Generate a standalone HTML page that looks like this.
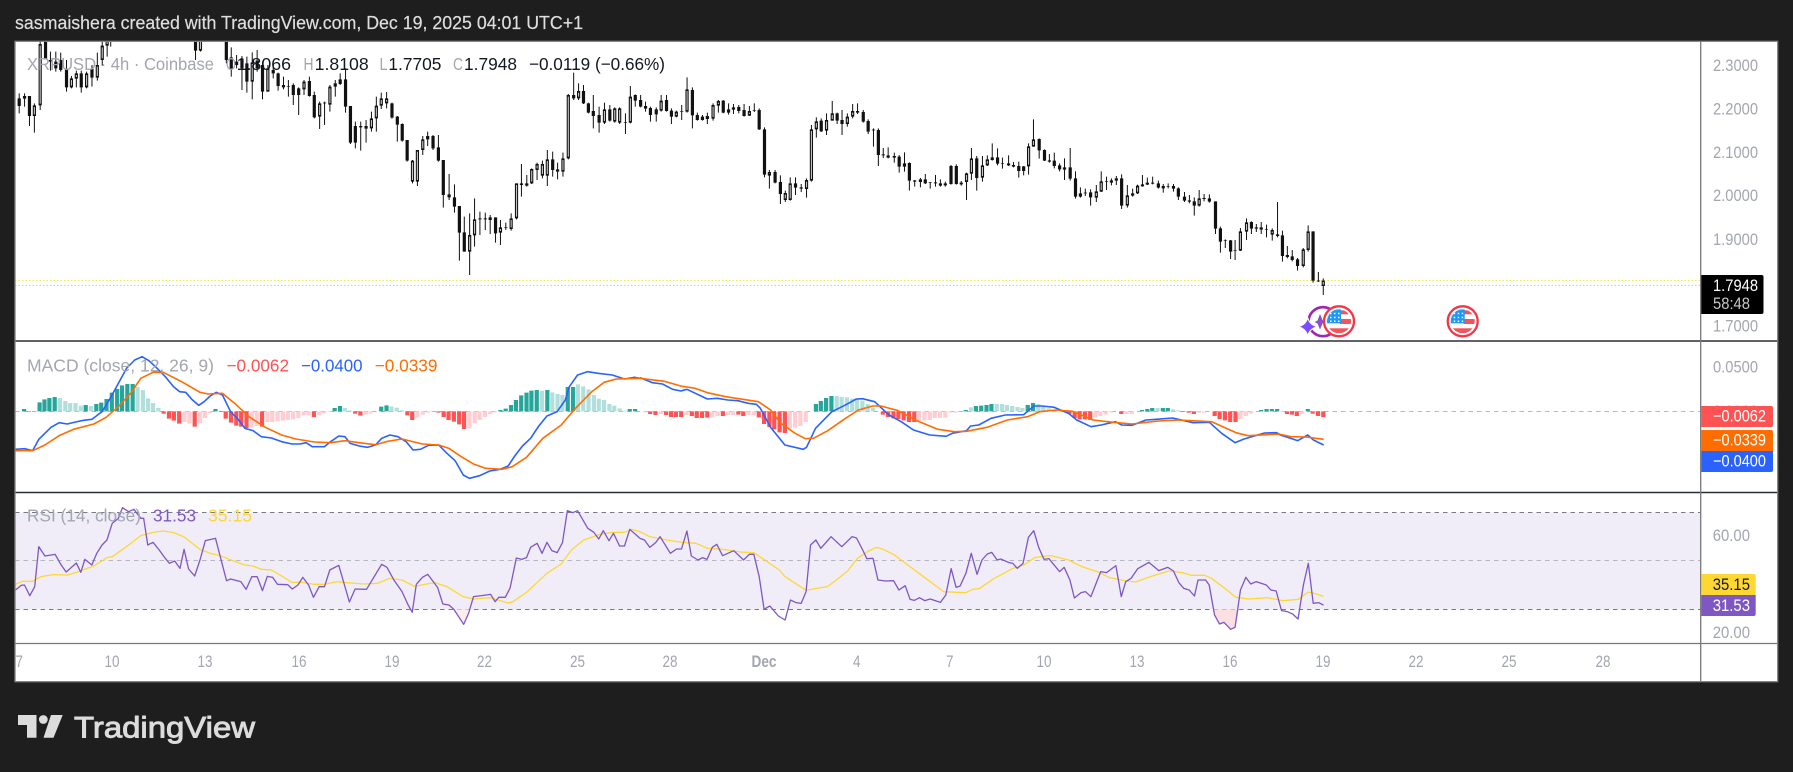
<!DOCTYPE html>
<html lang="en"><head><meta charset="utf-8"><title>XRPUSD 4h Coinbase - TradingView</title>
<style>
html,body{margin:0;padding:0;background:#1e1e1e;width:1793px;height:772px;overflow:hidden}
svg{display:block;font-family:"Liberation Sans",sans-serif}
path.v,polyline{vector-effect:non-scaling-stroke;fill:none}
polyline{stroke-linejoin:round}
.ax{font-size:16.5px;fill:#a3a6af}
.lg{font-size:17.5px}
.g{fill:#a3a6af}
.k{fill:#131722}
.tl{font-size:16.5px;fill:#a3a6af}
</style></head><body>
<svg width="1793" height="772" viewBox="0 0 1793 772" xmlns="http://www.w3.org/2000/svg">
<defs><clipPath id="fc"><circle r="12"/></clipPath></defs>
<rect width="1793" height="772" fill="#1e1e1e"/>
<rect x="15" y="41" width="1763" height="641" fill="#fff"/>

<!-- RSI band -->
<rect x="15" y="512.5" width="1686" height="97" fill="#f0edf8"/>
<g fill="none" stroke-dasharray="4.5 4" stroke-width="1">
<path d="M15 512.5H1701M15 609.5H1701" stroke="#787b86"/>
<path d="M15 560.5H1701M15 411.5H1701" stroke="#b6b8c0"/>
</g>
<g fill="none" stroke-dasharray="1.5 2" stroke-width="1">
<path d="M15 280.5H1701" stroke="#f5e64a"/>
<path d="M15 285.5H1701" stroke="#c9c9d4"/>
</g>

<!-- candles left -->
<g transform="scale(.44643,.33333)">
<path class="v" stroke="#111" stroke-width="1" d="M43 280V340M55 280V320M66 288V378M77 310V398M90 100V330M102 100V178M113 155V212M125 155V215M136 158V215M149 180V275M160 228V265M171 212V262M182 212V278M194 215V265M206 195V260M218 158V242M229 120V197M240 100V170M248 100V140M438 100V180M449 100V155M507 100V190M518 142V230M530 165V205M542 168V270M553 170V278M565 157V298M576 150V215M588 185V298M600 195V275M612 200V235M623 218V272M635 230V268M646 240V290M657 250V315M669 262V345M681 240V285M693 230V290M704 275V355M716 305V387M727 305V375M739 255V335M751 240V290M762 220V255M774 205V338M785 318V432M796 365V445M808 365V452M820 360V428M832 335V395M843 290V395M854 278V327M866 276V325M878 308V356M890 348V425M901 370V425M912 420V485M924 480V550M935 450V558M947 408V465M958 395V438M970 405V450M982 405V485M993 480V623M1006 522V600M1018 553V638M1029 618V782M1040 650V755M1052 640V825M1063 595V740M1075 635V705M1087 638V690M1098 645V702M1110 652V728M1121 660V735M1133 668V690M1145 640V692M1157 550V658M1168 492V590M1180 525V560M1191 505V552M1203 488V540M1215 482V535M1226 450V558M1238 455V530M1249 488V538M1261 458V530M1273 282V478M1285 218V300M1296 250V300M1307 255V312M1318 308V340M1329 285V385M1342 320V398M1354 308V372M1366 315V365M1377 322V368M1388 322V372M1401 340V402M1412 258V370M1423 283V320M1435 285V322M1446 305V335M1457 320V365M1470 322V365M1481 285V335M1493 285V335M1504 325V372M1515 332V352M1527 315V360M1539 232V338M1551 262V385M1562 338V362"/>
<path class="v" stroke="#111" stroke-width="3.2" d="M43 295V318M55 288V296M66 288V348M77 316V348M90 132V316M102 100V178M113 180V185M125 185V205M136 180V210M149 208V262M160 235V262M171 220V236M182 220V262M194 220V262M206 207V233M218 195V233M229 137V180M240 100V137M438 100V152M449 100V152M507 100V180M518 172V207M530 185V195M542 176V205M553 190V245M565 187V245M576 182V205M588 195V275M600 205V275M612 210V220M623 220V258M635 255V262M646 258V260M657 255V285M669 265V285M681 245V268M693 243V288M704 285V352M716 310V350M727 308V310M739 260V314M751 250V260M762 238V252M774 238V320M785 318V428M796 378V428M808 378V382M820 378V386M832 355V385M843 317V355M854 295V317M866 295V310M878 310V353M890 350V374M901 372V422M912 420V482M924 482V545M935 450V545M947 418V450M958 408V418M970 408V445M982 442V482M993 480V585M1006 583V592M1018 592V620M1029 618V698M1040 697V755M1052 705V755M1063 658V706M1075 655V658M1087 655V658M1098 652V660M1110 652V700M1121 682V698M1133 682V684M1145 655V687M1157 550V655M1168 550V555M1180 550V557M1191 507V550M1203 492V510M1215 492V527M1226 478V527M1238 478V510M1249 508V515M1261 475V515M1273 285V475M1285 285V295M1296 273V295M1307 273V310M1318 310V338M1329 333V348M1342 345V368M1354 328V368M1366 328V362M1377 325V365M1388 325V368M1401 366V368M1412 290V368M1423 285V302M1435 300V320M1446 318V326M1457 324V345M1470 328V343M1481 302V332M1493 300V333M1504 332V350M1515 335V350M1527 333V335M1539 268V335M1551 270V346M1562 345V360"/>
<path class="v" stroke="#c4c4c4" stroke-width="1.1" d="M77 321V343M90 137V311M160 240V257M171 225V231M194 225V257M218 200V228M229 142V175M240 100V132M449 100V147M565 192V240M600 210V270M681 250V263M716 315V345M739 265V309M832 360V380M843 322V350M854 300V312M866 300V305M924 487V540M935 455V540M947 423V445M958 413V413M1052 710V750M1063 663V701M1121 687V693M1145 660V682M1157 555V650M1191 512V545M1203 497V505M1215 497V522M1226 483V522M1261 480V510M1273 290V470M1296 278V290M1354 333V363M1377 330V360M1388 330V363M1412 295V363M1481 307V327M1515 340V345M1539 273V330"/>
</g>
<!-- candles right -->
<g transform="translate(700,30) scale(.40816,.33333)">
<path class="v" stroke="#111" stroke-width="1" d="M6 255V272M18 248V282M32 220V272M45 210V248M57 210V250M70 220V254M82 222V252M95 225V250M108 222V260M121 228V258M133 220V246M145 235V300M158 292V442M170 420V476M184 420V460M197 436V522M209 482V516M221 442V512M234 442V495M248 462V486M261 445V503M273 285V455M285 262V323M297 265V306M310 250V315M324 213V272M336 248V282M348 240V315M361 250V290M374 222V265M386 220V252M400 240V278M412 268V312M425 295V350M437 295V408M449 354V384M461 352V385M476 368V398M488 375V428M501 367V425M513 397V482M526 450V470M540 444V472M552 432V462M564 456V476M577 435V470M589 448V470M601 455V470M615 405V464M628 403V464M640 453V467M653 428V510M665 354V450M678 378V482M692 378V455M704 376V408M716 340V392M729 355V406M741 383V416M756 376V408M768 396V412M781 395V443M793 408V436M805 340V434M817 268V350M831 325V386M844 358V393M856 372V398M868 368V415M881 400V424M893 385V450M907 354V452M920 424V506M932 472V503M944 476V498M957 478V527M971 465V516M983 424V486M996 440V480M1008 445V466M1020 438V465M1033 433V537M1047 465V533M1060 476V500M1072 464V492M1084 435V470M1096 443V465M1109 440V463M1123 452V476M1135 462V488M1147 460V475M1160 462V485M1172 472V510M1187 486V516M1199 495V520M1211 502V557M1223 480V530M1235 492V514M1248 493V518M1263 514V612M1275 590V668M1287 628V654M1300 630V687M1311 630V690M1324 594V663M1339 565V630M1351 574V612M1363 582V606M1375 576V612M1388 584V622M1402 595V632M1415 516V622M1427 602V695M1439 648V685M1451 660V694M1464 684V722M1478 654V712M1490 586V665M1502 604V758M1515 726V756M1527 745V795"/>
<path class="v" stroke="#111" stroke-width="3.2" d="M6 260V270M18 258V267M32 225V266M45 213V227M57 212V248M70 238V248M82 232V239M95 231V243M108 240V258M121 243V257M133 241V243M145 240V298M158 298V434M170 426V437M184 426V458M197 456V492M209 489V510M221 460V510M234 460V473M248 472V476M261 450V477M273 298V452M285 274V298M297 272V304M310 270V302M324 250V272M336 250V272M348 270V282M361 260V282M374 243V260M386 243V248M400 246V275M412 273V305M425 299V301M437 300V375M449 373V376M461 376V383M476 378V383M488 380V410M501 400V410M513 399V452M526 451V455M540 448V456M552 448V460M564 457V459M577 457V460M589 460V467M601 460V466M615 408V462M628 408V462M640 458V463M653 430V456M665 385V431M678 385V444M692 406V443M704 388V406M716 382V390M729 382V401M741 399V401M756 400V406M768 405V410M781 408V423M793 409V423M805 349V409M817 328V350M831 327V361M844 360V392M856 391V395M868 392V408M881 406V418M893 412V419M907 412V446M920 445V500M932 490V500M944 488V490M957 487V502M971 484V503M983 454V485M996 453V455M1008 451V458M1020 445V452M1033 445V527M1047 496V527M1060 490V497M1072 467V490M1084 463V469M1096 458V464M1109 458V461M1123 460V473M1135 468V475M1147 469V471M1160 468V476M1172 475V500M1187 500V512M1199 511V515M1211 514V527M1223 505V527M1235 504V507M1248 505V515M1263 514V596M1275 595V635M1287 630V632M1300 631V665M1311 660V662M1324 604V662M1339 577V605M1351 576V596M1363 592V596M1375 592V599M1388 597V599M1402 600V614M1415 613V618M1427 616V678M1439 675V681M1451 679V690M1464 688V708M1478 658V708M1490 604V660M1502 604V752M1515 752V754M1527 752V768"/>
<path class="v" stroke="#c4c4c4" stroke-width="1.1" d="M32 230V261M45 218V222M121 248V252M170 431V432M221 465V505M209 494V505M261 455V472M273 303V447M285 279V293M310 275V297M324 255V267M361 265V277M374 248V255M653 435V451M665 390V426M692 411V438M704 393V401M805 354V404M817 333V345M971 489V498M983 459V480M1047 501V522M1072 472V485M1223 510V522M1324 609V657M1339 582V600M1402 605V609M1478 663V703M1490 609V655M1527 756V764"/>
</g>

<!-- MACD histogram -->
<g transform="translate(0,340) scale(.40816,.33333)">
<path class="v" fill="none" stroke="#26a69a" stroke-width="4.2" d="M59 214V207M97 214V187M109 214V178M121 214V174M134 214V171M210 214V195M236 214V192M248 214V188M261 214V177M274 214V158M287 214V147M299 214V136M312 214V132M325 214V132M528 214V207M820 214V204M833 214V198M934 214V200M947 214V196M1226 214V210M1239 214V206M1252 214V195M1264 214V180M1277 214V166M1290 214V158M1302 214V152M1315 214V150M1341 214V150M1391 214V141M1404 214V141M1543 214V207M1556 214V207"/>
<path class="v" fill="none" stroke="#b2dfdb" stroke-width="4.2" d="M147 214V174M160 214V183M172 214V189M185 214V189M198 214V197M223 214V198M337 214V141M350 214V150M363 214V175M375 214V189M388 214V204M845 214V204M858 214V212M959 214V199M972 214V203M985 214V211M1328 214V152M1353 214V157M1366 214V162M1378 214V165M1416 214V133M1429 214V139M1442 214V148M1455 214V165M1467 214V176M1480 214V180M1493 214V192M1505 214V197M1518 214V205M1531 214V212"/>
<path class="v" fill="none" stroke="#ff5252" stroke-width="4.2" d="M71 214V216M401 214V221M414 214V236M426 214V242M439 214V251M477 214V260M541 214V216M553 214V236M566 214V248M579 214V257M591 214V260M604 214V264M642 214V260M769 214V231M870 214V221M883 214V227M998 214V226M1010 214V240M1074 214V218M1087 214V231M1099 214V240M1112 214V245M1125 214V253M1137 214V267"/>
<path class="v" fill="none" stroke="#ffcdd2" stroke-width="4.2" d="M452 214V246M464 214V251M490 214V250M502 214V234M515 214V220M617 214V262M629 214V258M655 214V246M667 214V246M680 214V244M693 214V242M705 214V240M718 214V238M731 214V234M744 214V226M756 214V226M782 214V226M794 214V220M807 214V216M896 214V224M908 214V220M1023 214V233M1036 214V224M1049 214V218M1150 214V265M1163 214V250M1175 214V240M1188 214V231M1201 214V222M1213 214V217"/>
<polyline stroke="#2962ff" stroke-width="1.6" points="38,328 60,326 80,332 95,298 110,280 125,262 145,248 165,252 185,246 205,241 225,238 250,215 270,175 290,130 310,85 330,60 348,50 365,62 385,85 405,110 425,140 440,155 455,157 470,178 487,196 500,185 515,168 530,157 545,165 565,215 585,240 600,265 620,272 640,290 665,294 690,305 715,312 735,312 750,308 765,320 795,320 810,305 830,288 845,290 858,310 880,318 900,322 920,315 935,295 955,285 975,290 995,305 1012,330 1030,328 1050,316 1075,315 1095,340 1115,362 1135,405 1150,415 1175,407 1200,393 1225,388 1245,378 1260,350 1280,318 1300,295 1320,258 1340,228 1365,215 1385,180 1395,140 1415,105 1440,95 1465,100 1500,105 1530,117 1555,112 1568,115"/>
<polyline stroke="#ff6d00" stroke-width="1.6" points="38,332 80,332 110,315 145,287 180,268 230,252 260,232 290,200 320,160 345,115 375,97 400,97 445,125 490,157 510,162 545,160 575,190 610,230 650,262 690,285 725,297 770,306 810,308 845,302 880,308 920,314 950,304 985,297 1035,312 1075,315 1100,325 1130,350 1160,372 1190,385 1230,388 1255,380 1290,352 1330,295 1375,255 1410,205 1450,155 1480,127 1510,117 1568,115"/>
</g>
<g transform="translate(640,340) scale(.40816,.33333)">
<path class="v" fill="none" stroke="#26a69a" stroke-width="4.2" d="M431 214V192M443 214V183M456 214V174M469 214V168M798 214V210M823 214V198M836 214V197M849 214V195M861 214V192M950 214V195M963 214V189M1230 214V210M1243 214V207M1255 214V204M1281 214V204M1293 214V204M1522 214V210M1535 214V207M1548 214V207M1561 214V207"/>
<path class="v" fill="none" stroke="#b2dfdb" stroke-width="4.2" d="M482 214V168M494 214V171M507 214V172M520 214V176M532 214V178M545 214V182M558 214V192M571 214V204M811 214V202M874 214V192M887 214V192M899 214V195M912 214V198M925 214V201M937 214V204M976 214V192M988 214V200M1001 214V205M1014 214V210M1268 214V204M1306 214V208M1318 214V211"/>
<path class="v" fill="none" stroke="#ff5252" stroke-width="4.2" d="M25 214V222M38 214V225M64 214V225M76 214V231M88 214V231M101 214V231M127 214V228M139 214V234M152 214V234M165 214V233M203 214V228M241 214V224M253 214V228M291 214V232M304 214V252M317 214V261M329 214V268M342 214V277M355 214V279M595 214V224M608 214V231M621 214V235M633 214V237M646 214V241M659 214V246M672 214V246M1052 214V222M1065 214V234M1077 214V238M1090 214V238M1103 214V240M1179 214V222M1331 214V216M1344 214V218M1357 214V222M1408 214V228M1420 214V237M1433 214V241M1446 214V246M1459 214V246"/>
<path class="v" fill="none" stroke="#ffcdd2" stroke-width="4.2" d="M12 214V217M51 214V222M114 214V225M177 214V232M190 214V228M216 214V225M228 214V225M266 214V225M279 214V225M367 214V266M380 214V263M393 214V258M406 214V246M684 214V243M697 214V242M710 214V240M722 214V234M735 214V234M748 214V232M760 214V218M773 214V218M1116 214V232M1128 214V228M1141 214V224M1154 214V218M1192 214V222M1205 214V222M1369 214V218M1382 214V218M1471 214V237M1484 214V228M1497 214V221"/>
<polyline stroke="#2962ff" stroke-width="1.6" points="0,113 30,128 55,132 80,148 100,153 115,148 165,177 190,175 215,180 240,182 265,190 285,193 295,205 320,262 355,315 400,328 408,322 430,265 470,215 500,197 530,177 545,176 575,185 610,225 640,245 670,270 710,285 750,289 765,280 800,272 810,258 830,255 860,235 895,225 940,224 965,198 985,198 1015,202 1050,220 1070,240 1105,260 1130,255 1165,245 1180,255 1205,256 1240,240 1265,238 1305,234 1355,248 1395,247 1425,280 1458,308 1480,297 1530,279 1560,278 1568,285"/>
<polyline stroke="#ff6d00" stroke-width="1.6" points="0,115 60,124 100,138 135,145 165,158 210,170 290,185 320,210 345,250 380,280 405,296 425,295 460,272 500,238 535,210 570,198 590,198 630,211 680,243 730,268 770,275 800,274 850,262 900,240 950,230 980,215 1020,210 1060,214 1110,240 1160,247 1205,252 1270,243 1320,240 1400,245 1460,278 1490,287 1568,282"/>
</g>
<g transform="translate(1200,190) scale(.37821,.33333)">
<path class="v" fill="none" stroke="#26a69a" stroke-width="4.2" d="M285 664V657"/>
<path class="v" fill="none" stroke="#ff5252" stroke-width="4.2" d="M230 664V672M243 664V674M256 664V678M298 664V671M312 664V678M326 664V681"/>
<path class="v" fill="none" stroke="#ffcdd2" stroke-width="4.2" d="M216 664V666M270 664V672"/>
<polyline stroke="#2962ff" stroke-width="1.6" points="212,735 240,745 258,752 285,735 300,750 327,765"/>
<polyline stroke="#ff6d00" stroke-width="1.6" points="212,733 240,740 280,741 327,748"/>
</g>

<!-- RSI lines -->
<g transform="translate(0,490) scale(.40816,.33333)">
<polygon points="1105,358 1112,358 1136,403 1148,370 1155,358" fill="#fdeeee"/>
<polyline stroke="#fdd835" stroke-width="1.3" points="38,283 55,274 80,274 100,260 130,254 165,255 190,246 230,228 262,203 275,200 315,165 345,137 375,127 400,123 425,128 450,140 490,178 515,190 540,197 570,212 600,225 620,228 640,238 665,240 690,258 715,277 740,277 770,283 795,283 825,275 860,279 890,282 925,280 955,265 985,270 1015,289 1040,283 1065,278 1095,290 1135,320 1160,327 1200,323 1245,339 1255,336 1290,307 1340,250 1375,222 1400,180 1430,150 1470,133 1500,127 1530,127 1548,118 1568,125"/>
<polyline stroke="#7e57c2" stroke-width="1.3" points="38,300 52,286 60,285 73,317 85,290 95,170 110,198 135,193 150,225 162,246 175,232 187,219 198,247 208,208 225,225 237,190 250,165 262,150 275,100 290,85 300,53 315,65 328,58 345,85 352,85 362,165 375,157 390,180 405,205 415,220 428,213 441,235 451,178 462,237 477,258 490,210 503,152 528,145 555,272 565,267 590,275 603,298 617,260 630,260 643,302 655,259 668,262 680,283 705,284 716,297 730,285 742,262 756,285 768,322 782,290 795,290 808,240 830,226 856,336 870,297 898,298 935,223 948,232 965,270 985,305 1000,345 1010,367 1020,283 1035,262 1048,253 1072,292 1085,342 1100,345 1112,358 1136,403 1148,370 1160,320 1180,317 1202,313 1213,335 1222,322 1238,322 1250,293 1265,204 1278,208 1290,203 1300,172 1316,160 1328,190 1340,157 1352,182 1365,188 1378,158 1390,62 1403,68 1415,62 1440,115 1455,127 1467,147 1478,122 1492,152 1503,130 1518,168 1530,168 1543,118 1568,145"/>
</g>
<g transform="translate(640,490) scale(.44643,.33333)">
<polygon points="1285,358 1287,375 1298,402 1308,397 1323,418 1333,412 1342,358" fill="#fcdfe1"/>
<polyline stroke="#fdd835" stroke-width="1.3" points="0,125 22,140 60,150 95,157 125,160 152,175 180,177 225,186 255,188 285,215 312,240 325,260 372,301 395,295 420,290 440,270 465,243 487,205 512,183 530,172 545,178 570,195 600,225 640,265 680,305 730,308 745,298 760,296 790,268 815,250 835,235 860,225 885,202 920,197 960,210 990,230 1030,248 1050,262 1085,272 1110,276 1150,257 1185,243 1215,248 1235,256 1265,256 1280,265 1310,295 1335,322 1365,327 1405,323 1440,332 1475,328 1497,306 1510,310 1531,319"/>
<polyline stroke="#7e57c2" stroke-width="1.3" points="0,145 10,150 22,172 35,158 45,140 68,190 82,177 93,177 105,123 115,198 130,210 140,203 150,208 162,172 172,163 185,197 210,182 232,210 245,193 255,193 267,260 278,358 291,348 310,378 325,390 337,330 350,338 361,340 372,305 382,165 394,150 405,175 428,140 452,170 475,140 485,144 500,183 508,206 522,205 533,270 550,273 568,272 580,300 594,287 605,328 615,331 626,323 638,332 650,327 673,337 685,315 697,236 708,292 717,288 730,250 742,190 755,253 766,210 778,192 788,187 800,210 808,207 825,217 835,220 845,235 858,220 870,142 882,122 893,172 905,208 916,206 940,245 950,232 963,270 973,324 988,308 998,305 1010,320 1032,245 1045,248 1066,227 1078,320 1088,275 1100,265 1115,236 1140,217 1162,242 1182,232 1195,243 1207,278 1218,295 1230,300 1242,318 1250,270 1267,270 1275,285 1287,375 1298,402 1308,397 1323,418 1333,412 1345,300 1357,262 1368,282 1380,275 1403,285 1413,300 1425,303 1437,362 1450,365 1462,372 1474,387 1486,285 1497,220 1508,340 1520,338 1531,345"/>
</g>

<!-- event icons -->
<circle cx="1323" cy="321.7" r="14.5" fill="none" stroke="#9c27b0" stroke-width="2.6"/>
<path d="M1320 314l2.5 6 4 1.5-4 2-2.5 6-2.5-6-3-1.5 3-1.5z" fill="#8e4ccf"/>
<path d="M1307.7 317.5Q1309.5 325 1317.5 326.7Q1309.5 328.5 1307.7 336Q1306 328.5 1298 326.7Q1306 325 1307.7 317.5Z" fill="#7c4dff" stroke="#fff" stroke-width="1"/>
<g id="usf" transform="translate(1339,321.3)">
<circle r="15" fill="#fff" stroke="#f23645" stroke-width="2.3"/>
<g clip-path="url(#fc)">
<rect x="-12" y="-12" width="24" height="24" fill="#fff"/>
<rect x="1" y="-11" width="12" height="4" fill="#f5535c"/>
<rect x="1" y="-2.3" width="12" height="5" fill="#f5535c"/>
<rect x="-12" y="7" width="24" height="5" fill="#f5535c"/>
<rect x="-12" y="-12" width="14" height="14" fill="#2196f3"/>
<path d="M-9-8.5h1.5v1.5h-1.5zM-5-8.5h1.5v1.5h-1.5zM-1-8.5h1.5v1.5h-1.5zM-9-4.5h1.5v1.5h-1.5zM-5-4.5h1.5v1.5h-1.5zM-1-4.5h1.5v1.5h-1.5zM-9-.8h1.5v1.5h-1.5zM-5-.8h1.5v1.5h-1.5zM-1-.8h1.5v1.5h-1.5z" fill="#fff"/>
</g></g>
<use href="#usf" x="123.7"/>

<!-- covers and frame -->
<rect x="0" y="0" width="1793" height="41" fill="#1e1e1e"/>
<rect x="0" y="0" width="15" height="772" fill="#1e1e1e"/>
<path d="M15 341H1778M15 492.5H1778" stroke="#2a2e39" stroke-width="1.4"/>
<path d="M15 643.5H1778M1700.7 41V682" stroke="#787878" stroke-width="1.3"/>
<rect x="15" y="41.3" width="1762.7" height="640.4" fill="none" stroke="#808080" stroke-width="1.3"/>

<!-- header -->
<text x="15" y="29" font-size="18" fill="#dedede" stroke="#dedede" stroke-width=".2" textLength="568" lengthAdjust="spacingAndGlyphs">sasmaishera created with TradingView.com, Dec 19, 2025 04:01 UTC+1</text>

<!-- legend main -->
<g class="lg">
<text x="27" y="70" class="g" textLength="187" lengthAdjust="spacingAndGlyphs">XRPUSD · 4h · Coinbase</text>
<text x="226" y="70" class="g" textLength="10" lengthAdjust="spacingAndGlyphs">O</text><text x="236.6" y="70" class="k" textLength="54.4" lengthAdjust="spacingAndGlyphs">1.8066</text>
<text x="303.5" y="70" class="g" textLength="10" lengthAdjust="spacingAndGlyphs">H</text><text x="314.7" y="70" class="k" textLength="54" lengthAdjust="spacingAndGlyphs">1.8108</text>
<text x="379.5" y="70" class="g" textLength="8" lengthAdjust="spacingAndGlyphs">L</text><text x="388.4" y="70" class="k" textLength="53" lengthAdjust="spacingAndGlyphs">1.7705</text>
<text x="453" y="70" class="g" textLength="10" lengthAdjust="spacingAndGlyphs">C</text><text x="464" y="70" class="k" textLength="53" lengthAdjust="spacingAndGlyphs">1.7948</text>
<text x="529" y="70" class="k" textLength="136" lengthAdjust="spacingAndGlyphs">−0.0119 (−0.66%)</text>
<!-- legend macd -->
<text x="27" y="371.7" class="g" textLength="187" lengthAdjust="spacingAndGlyphs">MACD (close, 12, 26, 9)</text>
<text x="226.5" y="371.7" fill="#ff5252" textLength="62.5" lengthAdjust="spacingAndGlyphs">−0.0062</text>
<text x="301" y="371.7" fill="#2962ff" textLength="61.5" lengthAdjust="spacingAndGlyphs">−0.0400</text>
<text x="374.7" y="371.7" fill="#ff6d00" textLength="62.8" lengthAdjust="spacingAndGlyphs">−0.0339</text>
<!-- legend rsi -->
<text x="27" y="521.7" class="g" textLength="114" lengthAdjust="spacingAndGlyphs">RSI (14, close)</text>
<text x="153" y="521.7" fill="#7e57c2" textLength="43" lengthAdjust="spacingAndGlyphs">31.53</text>
<text x="208" y="521.7" fill="#fdd835" textLength="44" lengthAdjust="spacingAndGlyphs">35.15</text>
</g>

<!-- price axis -->
<g class="ax">
<text x="1713" y="71" textLength="45" lengthAdjust="spacingAndGlyphs">2.3000</text>
<text x="1713" y="114.4" textLength="45" lengthAdjust="spacingAndGlyphs">2.2000</text>
<text x="1713" y="157.8" textLength="45" lengthAdjust="spacingAndGlyphs">2.1000</text>
<text x="1713" y="201.2" textLength="45" lengthAdjust="spacingAndGlyphs">2.0000</text>
<text x="1713" y="245" textLength="45" lengthAdjust="spacingAndGlyphs">1.9000</text>
<text x="1713" y="331.5" textLength="45" lengthAdjust="spacingAndGlyphs">1.7000</text>
<text x="1713" y="372.7" textLength="45" lengthAdjust="spacingAndGlyphs">0.0500</text>
<text x="1713" y="417" textLength="45" lengthAdjust="spacingAndGlyphs">0.0000</text>
<text x="1712.7" y="541" textLength="37.3" lengthAdjust="spacingAndGlyphs">60.00</text>
<text x="1712.7" y="638" textLength="37.3" lengthAdjust="spacingAndGlyphs">20.00</text>
</g>
<path d="M1701.3 275H1761.5a2 2 0 0 1 2 2V312a2 2 0 0 1-2 2H1701.3Z" fill="#000"/>
<text x="1713" y="291" font-size="16.5" fill="#fff" textLength="45" lengthAdjust="spacingAndGlyphs">1.7948</text>
<text x="1713" y="309" font-size="16.5" fill="#c8c8c8" textLength="37" lengthAdjust="spacingAndGlyphs">58:48</text>

<path d="M1701.3 406H1771a2 2 0 0 1 2 2V425a2 2 0 0 1-2 2H1701.3Z" fill="#ff5252"/>
<path d="M1701.3 430H1771a2 2 0 0 1 2 2V451H1701.3Z" fill="#ff6d00"/>
<path d="M1701.3 451H1773V470a2 2 0 0 1-2 2H1701.3Z" fill="#2962ff"/>
<g font-size="16.5" fill="#fff">
<text x="1713" y="421.7" textLength="53" lengthAdjust="spacingAndGlyphs">−0.0062</text>
<text x="1713" y="445.7" textLength="53" lengthAdjust="spacingAndGlyphs">−0.0339</text>
<text x="1713" y="466.7" textLength="53" lengthAdjust="spacingAndGlyphs">−0.0400</text>
</g>
<path d="M1701.3 574H1753.7a2 2 0 0 1 2 2V595H1701.3Z" fill="#fdd835"/>
<path d="M1701.3 595H1755.7V614a2 2 0 0 1-2 2H1701.3Z" fill="#7e57c2"/>
<text x="1712.7" y="590" font-size="16.5" fill="#131722" textLength="37.3" lengthAdjust="spacingAndGlyphs">35.15</text>
<text x="1712.7" y="611" font-size="16.5" fill="#fff" textLength="37.3" lengthAdjust="spacingAndGlyphs">31.53</text>

<!-- time axis -->
<g class="tl">
<text x="15.5" y="667" textLength="7.5" lengthAdjust="spacingAndGlyphs">7</text>
<text x="104.5" y="667" textLength="15" lengthAdjust="spacingAndGlyphs">10</text>
<text x="197.5" y="667" textLength="15" lengthAdjust="spacingAndGlyphs">13</text>
<text x="291.5" y="667" textLength="15" lengthAdjust="spacingAndGlyphs">16</text>
<text x="384.5" y="667" textLength="15" lengthAdjust="spacingAndGlyphs">19</text>
<text x="477" y="667" textLength="15" lengthAdjust="spacingAndGlyphs">22</text>
<text x="570" y="667" textLength="15" lengthAdjust="spacingAndGlyphs">25</text>
<text x="662.5" y="667" textLength="15" lengthAdjust="spacingAndGlyphs">28</text>
<text x="751.5" y="667" font-weight="700" textLength="25" lengthAdjust="spacingAndGlyphs">Dec</text>
<text x="853" y="667" textLength="7.5" lengthAdjust="spacingAndGlyphs">4</text>
<text x="946" y="667" textLength="7.5" lengthAdjust="spacingAndGlyphs">7</text>
<text x="1036.5" y="667" textLength="15" lengthAdjust="spacingAndGlyphs">10</text>
<text x="1129.5" y="667" textLength="15" lengthAdjust="spacingAndGlyphs">13</text>
<text x="1222.5" y="667" textLength="15" lengthAdjust="spacingAndGlyphs">16</text>
<text x="1315.5" y="667" textLength="15" lengthAdjust="spacingAndGlyphs">19</text>
<text x="1408.5" y="667" textLength="15" lengthAdjust="spacingAndGlyphs">22</text>
<text x="1501.5" y="667" textLength="15" lengthAdjust="spacingAndGlyphs">25</text>
<text x="1595.5" y="667" textLength="15" lengthAdjust="spacingAndGlyphs">28</text>
</g>

<!-- logo -->
<g fill="#dcdcdc">
<path d="M18 715H36.5V737.7H27V725H18Z"/>
<circle cx="43.3" cy="719.5" r="4.4"/>
<path d="M51 715H62.7L53.5 737.7H43.5Z"/>
<text x="74" y="737.3" font-size="29.5" stroke="#dcdcdc" stroke-width=".9" textLength="181" lengthAdjust="spacingAndGlyphs">TradingView</text>
</g>
</svg>
</body></html>
